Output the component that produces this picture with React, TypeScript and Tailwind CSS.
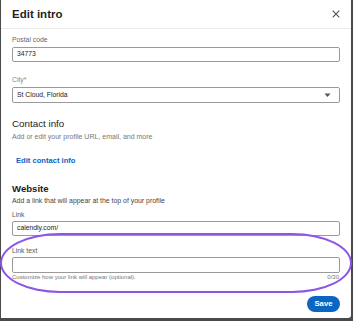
import React from "react";

export default function App() {
  return (
    <div
      className="relative w-[353px] h-[321px] overflow-hidden bg-[#4a4a4a]"
      style={{ fontFamily: '"Liberation Sans", Arial, sans-serif' }}
    >
      <div className="absolute left-[1px] top-0 w-[350px] h-[318px] bg-white rounded-br-[3px] flex flex-col">
        <div className="shrink-0 h-[29px] flex items-center justify-between pl-[11px] pr-[11px] border-b border-[#ececec]">
          <span className="text-[11.5px] leading-[14px] font-bold text-[#1f1f1f]">Edit intro</span>
          <svg width="8" height="8" viewBox="0 0 8 8">
            <path d="M0.7 0.7 L7.3 7.3 M7.3 0.7 L0.7 7.3" stroke="#555" strokeWidth="1.2" />
          </svg>
        </div>
        <div className="px-[11px] flex flex-col">
          <div className="mt-[6px] text-[6.8px] leading-[10px] text-[#666]">Postal code</div>
          <div className="mt-[2px] h-[15px] border border-[#9a9a9a] rounded-[2px] flex items-center px-[4px] text-[6.8px] text-[#222]">
            34773
          </div>
          <div className="mt-[13px] text-[6.8px] leading-[10px] text-[#888]">City*</div>
          <div className="mt-[2px] h-[16px] border border-[#9a9a9a] rounded-[2px] flex items-center justify-between px-[4px] text-[6.8px] text-[#222]">
            <span>St Cloud, Florida</span>
            <svg width="7" height="5" viewBox="0 0 7 5" className="mr-[4px]">
              <path d="M0.5 0.5 L6.5 0.5 L3.5 4 Z" fill="#555" />
            </svg>
          </div>
          <div className="mt-[14px] text-[9.8px] leading-[14px] text-[#222]">Contact info</div>
          <div className="mt-[1px] text-[7px] leading-[10px] text-[#777]">Add or edit your profile URL, email, and more</div>
          <div className="mt-[14px] pl-[4px] text-[7.6px] leading-[10px] font-bold text-[#0a66c2]">Edit contact info</div>
          <div className="mt-[16px] text-[9.6px] leading-[14px] font-bold text-[#222]">Website</div>
          <div className="text-[6.9px] leading-[10px] text-[#444]">Add a link that will appear at the top of your profile</div>
          <div className="mt-[4px] text-[6.8px] leading-[10px] text-[#555]">Link</div>
          <div className="mt-[1px] h-[15px] border border-[#9a9a9a] rounded-[2px] flex items-center px-[4px] text-[6.8px] text-[#222]">
            calendly.com/
          </div>
          <div className="mt-[10px] text-[6.8px] leading-[10px] text-[#555]">Link text</div>
          <div className="mt-[1px] h-[16px] border border-[#9a9a9a] rounded-[2px]" />
          <div className="flex justify-between text-[6px] leading-[8px] text-[#777]">
            <span>Customize how your link will appear (optional).</span>
            <span className="mr-[1px]">0/30</span>
          </div>
          <div className="mt-[15px] flex justify-end">
            <div className="h-[16px] w-[33px] rounded-full bg-[#0a66c2] flex items-center justify-center text-white text-[7.8px] font-bold">
              Save
            </div>
          </div>
        </div>
      </div>
      <div className="absolute left-0 top-[233px] w-[352px] h-[60px] border-2 border-[#8b55e6] rounded-[60px/30px]" />
    </div>
  );
}
